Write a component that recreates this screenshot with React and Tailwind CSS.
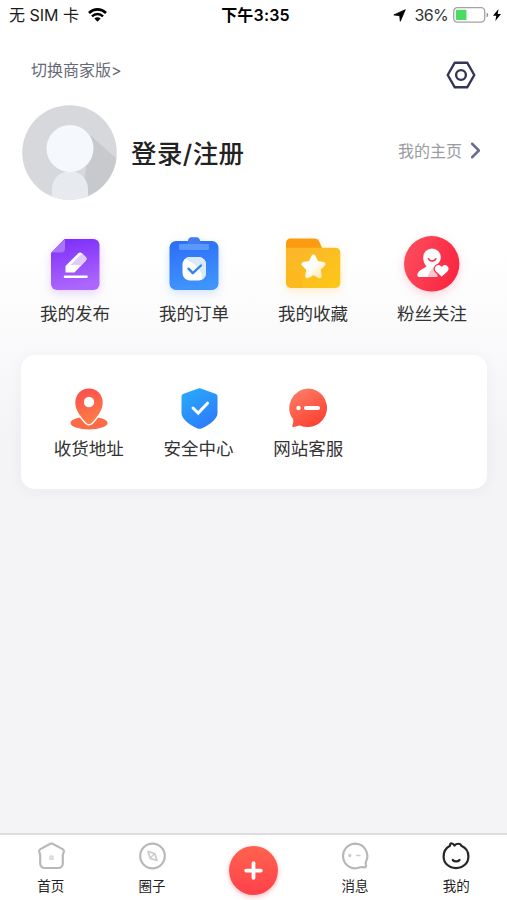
import { ChevronRight, Plus } from 'lucide-react';

/* ---------- Status bar icons ---------- */

const WifiIcon = () => (
  <svg width="19" height="14" viewBox="0 0 19 14" fill="none">
    <path d="M1 5C6 .2 13 .2 18 5" stroke="#000" strokeWidth="2.7" />
    <path d="M4 8.3C7.2 5.2 11.8 5.2 15 8.3" stroke="#000" strokeWidth="2.4" />
    <path d="M9.5 13.7 6.4 10.5C8.1 8.9 10.9 8.9 12.6 10.5Z" fill="#000" />
  </svg>
);

const BatteryIcon = () => (
  <svg width="36" height="16" viewBox="0 0 36 16" fill="none">
    <rect x=".7" y=".7" width="31" height="14.4" rx="3.6" stroke="#a3a3a3" strokeWidth="1.3" />
    <rect x="2.8" y="2.8" width="10.7" height="10.2" rx="1" fill="#4cd964" />
    <path d="M33.6 5.4c2.1 1 2.1 4 0 5Z" fill="#8f8f8f" />
  </svg>
);

/* ---------- Quick entry icons ---------- */

const PublishIcon = () => (
  <svg width="56" height="56" viewBox="0 -1.5 56 56" className="drop-shadow-[0_3px_5px_rgba(150,80,255,0.25)]">
    <defs>
      <linearGradient id="publish" x1="0" y1="0" x2=".2" y2="1">
        <stop stopColor="#7b2bf9" />
        <stop offset="1" stopColor="#ac66fc" />
      </linearGradient>
    </defs>
    <path d="M20.5 1.5H46.500a6 6 0 0 1 6 6V46.500a6 6 0 0 1-6 6H10a6 6 0 0 1-6-6V15.500L17.500 1.500Z" fill="url(#publish)" />
    <path d="M18 1.500V11a4 4 0 0 1-4 4H4.300Z" fill="#a874fa" />
    <path d="M18.500 35V28.500L31 16a3 3 0 0 1 4.200 0l3.300 3.200a3 3 0 0 1 0 4.200L27.500 35Z" fill="#fff" />
    <path d="M23.500 27.500 33 18l2-2 3.500 3.200a3 3 0 0 1 0 4.200L34.300 27.500Z" fill="#e0cbfe" />
    <path d="M18 39.200H39.500" stroke="#fff" strokeWidth="2.600" strokeLinecap="round" />
  </svg>
);

const OrderIcon = () => (
  <svg width="56" height="56" viewBox="0 -1.5 56 56" className="drop-shadow-[0_3px_5px_rgba(50,130,255,0.22)]">
    <defs>
      <linearGradient id="order" x1="0" y1="0" x2=".2" y2="1">
        <stop stopColor="#2b6cf8" />
        <stop offset="1" stopColor="#3f94fc" />
      </linearGradient>
    </defs>
    <rect x="3.500" y="3.500" width="49" height="49" rx="6.500" fill="url(#order)" />
    <path d="M13 6.500H43V11a1.600 1.600 0 0 1-1.600 1.600H14.600A1.600 1.600 0 0 1 13 11Z" fill="#5b98fb" />
    <path d="M21 6.500 22.300 2A3 3 0 0 1 25 -.3h6a3 3 0 0 1 2.700 2.300L35 6.500Z" fill="#457bf0" />
    <rect x="16.500" y="19.500" width="23.500" height="23.500" rx="7.500" fill="#fff" />
    <path d="M24 19.500h8.500A7.500 7.500 0 0 1 40 27v8.500A7.500 7.500 0 0 1 36 42Q37 29 19 21.500A7 7 0 0 1 24 19.500" fill="#dceafe" />
    <path d="m22.500 31.200 4.300 4.500 8.200-7.700" fill="none" stroke="#3383ee" strokeWidth="2.400" strokeLinecap="round" strokeLinejoin="round" />
  </svg>
);

const FavoriteIcon = () => (
  <svg width="56" height="56" viewBox="0 -1 56 56" className="drop-shadow-[0_3px_5px_rgba(255,190,40,0.25)]">
    <defs>
      <linearGradient id="folder" x1="0" y1="0" x2="1" y2="1">
        <stop stopColor="#fbb42b" />
        <stop offset="1" stopColor="#fdc817" />
      </linearGradient>
      <linearGradient id="star" x1="0" y1="0" x2="1" y2="1">
        <stop offset=".45" stopColor="#fff" />
        <stop offset="1" stopColor="#ffe5a4" />
      </linearGradient>
    </defs>
    <path d="M1 6a4.500 4.500 0 0 1 4.500-4.500H29c3 0 4.500 1 5.500 3.500L37 11v8H1Z" fill="#fb9b0f" />
    <path d="M1 10.700H50.500A4.800 4.800 0 0 1 55.300 15.500V46a5 5 0 0 1-5 5H6a5 5 0 0 1-5-5Z" fill="url(#folder)" />
    <path d="M17 37v14H6a5 5 0 0 1-5-5V32Z" fill="#f9b21b" opacity=".35" />
    <path d="M28.500 17.500c.8 0 1.500.5 1.900 1.300l2.500 5.300 5.800.8c1.900.3 2.500 2.300 1.200 3.600l-4.200 4.200 1 6.100c.3 1.800-1.400 3-3 2.200l-5.200-2.800-5.200 2.800c-1.600.8-3.300-.4-3-2.200l1-6.100-4.200-4.200c-1.300-1.300-.7-3.300 1.200-3.600l5.800-.8 2.500-5.300c.4-.8 1.100-1.300 1.900-1.300Z" fill="url(#star)" />
  </svg>
);

const FansIcon = () => (
  <svg width="56" height="56" viewBox="0 0 56 56" className="drop-shadow-[0_3px_5px_rgba(255,60,80,0.22)]">
    <defs>
      <linearGradient id="fans" x1="0" y1=".3" x2="1" y2=".7">
        <stop stopColor="#fc4c5c" />
        <stop offset="1" stopColor="#fb2440" />
      </linearGradient>
    </defs>
    <circle cx="27.700" cy="27.800" r="27.700" fill="url(#fans)" />
    <path d="M28 12.500a8.800 8.800 0 0 1 8.800 8.800c0 3.300-1.600 5.500-3.800 7.300V41H15.500c-2 0-2.700-1.800-1.900-3.600 1.500-3.400 5-4.500 9-7-2.200-2.200-3.400-5.700-3.400-9A8.800 8.800 0 0 1 28 12.500Z" fill="#fff" />
    <path d="M33.500 29.500V41H23.500c1.500-5.500 5-9.500 10-11.500Z" fill="#fdc7cf" />
    <path d="M24.500 22.800c1.500 3 6 3 7.300 0" fill="none" stroke="#fb3a51" strokeWidth="1.700" strokeLinecap="round" />
    <path d="m37.500 42.300-6-5.500c-4-4.200 1.500-10.200 6-6 4.500-4.200 10 1.800 6 6Z" transform="translate(.2 -.8)" fill="#fff" stroke="#fb3049" strokeWidth="1.200" />
  </svg>
);

/* ---------- Service icons ---------- */

const AddressIcon = () => (
  <svg width="42" height="44" viewBox="0 -1 42 44">
    <defs>
      <linearGradient id="pin" x1="0" y1="0" x2=".3" y2="1">
        <stop stopColor="#fb4a4d" />
        <stop offset="1" stopColor="#fd7c46" />
      </linearGradient>
    </defs>
    <ellipse cx="21" cy="36" rx="18.500" ry="6.500" fill="#fb6b48" />
    <path d="M21 1.500c7.700 0 13.700 6 13.700 14 0 8-5.700 14.500-10.600 20-1.900 2.100-4.300 2.100-6.200 0-4.900-5.500-10.600-12-10.600-20 0-8 6-14 13.700-14Z" fill="url(#pin)" stroke="#fff" strokeWidth="3" paintOrder="stroke" />
    <circle cx="21" cy="15" r="5.200" fill="#fff" />
  </svg>
);

const SecurityIcon = () => (
  <svg width="42" height="44" viewBox="0 -1 42 44">
    <defs>
      <linearGradient id="shield" x1="0" y1="0" x2=".6" y2="1">
        <stop stopColor="#28aefb" />
        <stop offset="1" stopColor="#2d7cfb" />
      </linearGradient>
    </defs>
    <path d="M19.500 1.700q2-.8 4 0l14.500 5.400q1.500.7 1.500 2.500V26c0 6-7 11-15.500 15.300q-2.500 1-5 0C10.500 37 3.500 32 3.500 26V9.600Q3.500 7.800 5 7.100Z" fill="url(#shield)" />
    <path d="m15 21 5.200 5 9.300-9.800" fill="none" stroke="#fff" strokeWidth="3" strokeLinecap="round" />
  </svg>
);

const SupportIcon = () => (
  <svg width="42" height="44" viewBox="0 -1 42 44">
    <defs>
      <linearGradient id="support" x1=".1" y1="0" x2=".7" y2="1">
        <stop stopColor="#fd8068" />
        <stop offset="1" stopColor="#fc4030" />
      </linearGradient>
    </defs>
    <path d="M21 1.500a19.300 19.300 0 1 1-8 37c-2.500.2-4.500 1.400-7 1.400-1.300-.1-.6-1.500-.2-3 .5-1.800.8-3.500.1-4.800A19.500 19.500 0 0 1 21 1.500Z" fill="url(#support)" />
    <circle cx="11.500" cy="21" r="2.200" fill="#fff" />
    <path d="M19 21h12" stroke="#fff" strokeWidth="4" strokeLinecap="round" />
  </svg>
);

/* ---------- Tab bar icons ---------- */

const HomeTabIcon = () => (
  <svg width="28" height="28" viewBox="0 0 28 28" fill="none" stroke="#b8b8ba" strokeWidth="2.2" strokeLinejoin="round">
    <path d="M13.400 1.800q1.100-.6 2.200 0l10 5.300q1.600.9 1.200 2.500L25.800 13v8.500a4.500 4.500 0 0 1-4.500 4.500H7.700a4.500 4.500 0 0 1-4.500-4.500V13L2.200 9.600Q1.800 8 3.400 7.100Z" />
    <path d="M12.500 17.500v-2a2 2 0 0 1 4 0v2Z" fill="#dddde3" stroke="#dddde3" strokeWidth="1" />
  </svg>
);

const CircleTabIcon = () => (
  <svg width="28" height="28" viewBox="0 0 28 28" fill="none">
    <circle cx="14.500" cy="14" r="12.300" stroke="#b8b8ba" strokeWidth="2.2" />
    <path d="m10 9.500 6.800 2.200 2.200 6.800-6.800-2.200Z" stroke="#ccccd0" strokeWidth="1.800" strokeLinejoin="round" />
    <path d="m12 16 4.700-4.300" stroke="#ccccd0" strokeWidth="1.300" />
  </svg>
);

const MessageTabIcon = () => (
  <svg width="28" height="28" viewBox="0 0 28 28" fill="none">
    <path d="M14 1.700A12.300 12.300 0 0 1 25 19.500c-.5 1-.3 1.800-.1 3 .5 2.300 0 2.900-2 2.800-1.500-.1-2.300-.5-3.700 0A12.300 12.300 0 1 1 14 1.700Z" stroke="#b8b8ba" strokeWidth="2.2" />
    <circle cx="8.800" cy="13.500" r="1.700" fill="#ccccd1" />
    <path d="M15.800 13.500h3" stroke="#ccccd1" strokeWidth="1.700" strokeLinecap="round" />
  </svg>
);

const MineTabIcon = () => (
  <svg width="28" height="28" viewBox="0 0 28 28" fill="none" stroke="#262626" strokeWidth="2.2" strokeLinecap="round" strokeLinejoin="round">
    <path d="M8 3.800C8 1.800 8.700 1.200 10 1.500q1.700.4 2.500 2C14.500 1.300 18.500 1 19.300 3.700 23.500 5.500 26.400 9.700 26.400 14.500c0 6.700-5.400 11.600-12.400 11.600S1.600 21.200 1.600 14.500C1.600 10 4 6 8 3.800Z" />
    <path d="M10.800 18c1.400 1.900 5.300 1.900 6.700 0" />
  </svg>
);

const entries = [
  { label: '我的发布', Icon: PublishIcon },
  { label: '我的订单', Icon: OrderIcon },
  { label: '我的收藏', Icon: FavoriteIcon },
  { label: '粉丝关注', Icon: FansIcon },
];

const services = [
  { label: '收货地址', Icon: AddressIcon },
  { label: '安全中心', Icon: SecurityIcon },
  { label: '网站客服', Icon: SupportIcon },
];

const Tab = ({ label, Icon }) => (
  <button className="flex flex-1 flex-col items-center pt-[7px] text-[13.500px] leading-5 text-[#222]">
    <Icon />
    <span className="mt-[6px]">{label}</span>
  </button>
);

const StatusBar = () => (
  <div className="grid h-[30px] grid-cols-3 items-center text-[16px] leading-none text-[#1c1c1c]">
    <div className="flex items-center pl-[9px]">
      <span className="w-[79px] whitespace-nowrap">无 SIM 卡</span>
      <WifiIcon />
    </div>
    <div className="pl-1 text-center font-semibold tracking-[0.2px] text-black">下午3:35</div>
    <div className="flex items-center justify-end pr-[6px]">
      <svg width="13" height="13" viewBox="0 0 13 13" className="mr-[9px]">
        <path d="M12.300.7 7.300 12.300 6.700 6.700.8 5.900Z" fill="#000" stroke="#000" strokeWidth=".8" strokeLinejoin="round" />
      </svg>
      <span className="mr-[5px] tracking-[-0.7px] text-[#333]">36%</span>
      <BatteryIcon />
      <svg width="8" height="12" viewBox="0 0 8 12" className="ml-1">
        <path d="M5.500 0 0 6.800h3.300L2.300 12 8 5H4.700Z" fill="#000" />
      </svg>
    </div>
  </div>
);

const App = () => {
  return (
    <div className="flex h-[900px] w-[507px] flex-col overflow-hidden bg-[linear-gradient(to_bottom,#fff_250px,#f4f4f7_440px)] font-[Inter,'Noto_Sans_CJK_SC',sans-serif]">
      <StatusBar />

      {/* Switch version + settings */}
      <div className="flex h-[72px] items-start justify-between pl-[31px] pr-[31px] pt-[30px]">
        <button className="text-[16px] leading-5 text-[#666a76]">切换商家版&gt;</button>
        <svg width="30" height="28" viewBox="0 0 30 28" fill="none" stroke="#35355a" strokeWidth="2.400" strokeLinejoin="round" className="mt-px">
          <path d="M8.800 1.700H21.200L28.300 14 21.200 26.300H8.800L1.700 14Z" />
          <circle cx="15" cy="14" r="4.900" />
        </svg>
      </div>

      {/* Profile */}
      <div className="flex items-center pl-[22px] pr-[21px] pt-[3px]">
        <svg width="95" height="95" viewBox="0 0 95 95">
          <defs>
            <clipPath id="avatar">
              <circle cx="47.500" cy="47.500" r="47.300" />
            </clipPath>
          </defs>
          <g clipPath="url(#avatar)">
            <rect width="95" height="95" fill="#d6d8db" />
            <path d="M68 30 95 54V95H60Z" fill="#c8c9cd" />
            <path d="M30 95V84a18 18 0 0 1 36 0v11Z" fill="#e7eaee" />
            <circle cx="48" cy="43.500" r="23.500" fill="#f5f9fe" />
          </g>
        </svg>
        <h1 className="ml-[14px] flex-1 pt-[2px] text-[25.500px] font-medium leading-none tracking-[0.4px] text-[#222]">登录/注册</h1>
        <button className="-mt-1 flex items-center text-[16px] text-[#999ba3]">
          我的主页
          <ChevronRight size={27} strokeWidth={2.2} className="-mr-[3px] text-[#6c6c8c]" />
        </button>
      </div>

      {/* Quick entries */}
      <div className="grid grid-cols-4 px-[15.500px] pt-[36px]">
        {entries.map(({ label, Icon }) => (
          <button key={label} className="flex flex-col items-center text-[17.500px] leading-6 text-[#333]">
            <Icon />
            <span className="mt-[10px]">{label}</span>
          </button>
        ))}
      </div>

      {/* Services card */}
      <div className="ml-[21px] mr-[20px] mt-[28.500px] flex h-[134px] rounded-[14px] bg-white pl-[13px] pt-[31.500px] shadow-[0_2px_14px_rgba(60,60,90,0.05)]">
        {services.map(({ label, Icon }) => (
          <button key={label} className="flex w-[109.700px] flex-col items-center self-start text-[17.500px] leading-6 text-[#333]">
            <Icon />
            <span className="mt-[7px]">{label}</span>
          </button>
        ))}
      </div>

      {/* Tab bar */}
      <nav className="mt-auto flex h-[67px] border-t-2 border-[#dddde0] bg-white">
        <Tab label="首页" Icon={HomeTabIcon} />
        <Tab label="圈子" Icon={CircleTabIcon} />
        <div className="flex flex-1 justify-center pt-[11px]">
          <button className="flex size-[49px] items-center justify-center rounded-full bg-linear-to-b from-[#ff624f] to-[#ff3f4a] text-white shadow-[0_2px_5px_rgba(255,70,70,0.35)]">
            <Plus size={25} strokeWidth={3.6} />
          </button>
        </div>
        <Tab label="消息" Icon={MessageTabIcon} />
        <Tab label="我的" Icon={MineTabIcon} />
      </nav>
    </div>
  );
};

export default App;
